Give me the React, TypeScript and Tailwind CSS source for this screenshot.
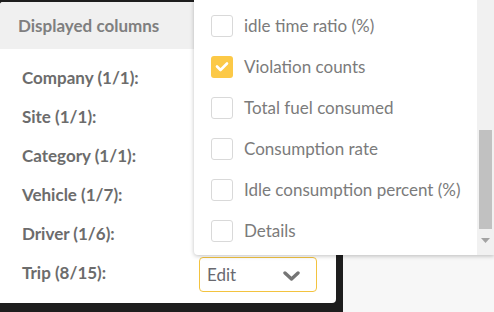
import * as React from 'react';

const GROUPS = ['Company (1/1):', 'Site (1/1):', 'Category (1/1):', 'Vehicle (1/7):', 'Driver (1/6):', 'Trip (8/15):'];

const COLUMNS = [
  { label: 'idle time ratio (%)', checked: false },
  { label: 'Violation counts', checked: true },
  { label: 'Total fuel consumed', checked: false },
  { label: 'Consumption rate', checked: false },
  { label: 'Idle consumption percent (%)', checked: false },
  { label: 'Details', checked: false }
];

const EditSelect = (): React.JSX.Element => (
  <div className="flex h-[35px] w-[118px] items-center justify-between rounded-[4px] border border-[#f3c33f] bg-white pl-[7px] pr-[16px]">
    <span className="text-[17px] text-[#69696f]">Edit</span>
    <svg width="17" height="11" viewBox="0 0 17 11" className="mt-[4px]">
      <path d="M2 2 L8.5 8 L15 2" fill="none" stroke="#757575" strokeWidth="3.4" strokeLinecap="round" strokeLinejoin="round" />
    </svg>
  </div>
);

const Checkbox = ({ checked }: { checked: boolean }): React.JSX.Element =>
  checked ? (
    <span className="flex h-[22px] w-[22px] items-center justify-center rounded-[3px] bg-[#fcc947]">
      <svg width="14" height="11" viewBox="0 0 14 11">
        <path d="M2 5.5 L5.5 9 L12 2.5" fill="none" stroke="#ffffff" strokeWidth="2.6" strokeLinecap="round" strokeLinejoin="round" />
      </svg>
    </span>
  ) : (
    <span className="h-[22px] w-[22px] rounded-[3px] border border-[#d9d9d9] bg-white" />
  );

export default function App(): React.JSX.Element {
  return (
    <div className="relative flex h-[312px] w-[494px] overflow-hidden bg-[#f7f7f7] font-['Lato','Liberation_Sans',sans-serif]">
      <div className="h-full w-[343px] bg-[#1e1e1e] pb-[9px] pr-[7px] pt-[2px]">
        <div className="flex h-full flex-col overflow-hidden rounded-br-[4px] rounded-tl-[3px] bg-white">
          <div className="flex h-[47px] shrink-0 items-center bg-[#f0f0f0] px-[18px]">
            <span className="text-[17px] font-bold text-[#7f7f7f]">Displayed columns</span>
          </div>
          <div className="flex flex-col pt-[9px]">
            {GROUPS.map((g) => (
              <div key={g} className="flex h-[39px] items-center pl-[22px]">
                <span className="w-[177px] text-[17px] font-bold text-[#6c6c6c]">{g}</span>
                <div className="mt-[4px]">
                  <EditSelect />
                </div>
              </div>
            ))}
          </div>
        </div>
      </div>

      {/* open dropdown */}
      <div className="absolute left-[194px] top-0 flex h-[255px] w-[300px] rounded-bl-[4px] bg-white shadow-[0_1px_4px_rgba(0,0,0,0.25)]">
        <div className="flex flex-1 flex-col pl-[17px] pt-[5px]">
          {COLUMNS.map((c) => (
            <div key={c.label} className="flex h-[41px] items-center gap-[11px]">
              <Checkbox checked={c.checked} />
              <span className="text-[17px] text-[#7b7b7b]">{c.label}</span>
            </div>
          ))}
        </div>
        <div className="flex w-[17px] flex-col bg-[#f1f1f1]">
          <div className="h-[130px]" />
          <div className="mx-[2px] h-[99px] bg-[#c1c1c1]" />
          <div className="flex flex-1 items-start justify-center pt-[9px]">
            <svg width="9" height="5" viewBox="0 0 9 5">
              <path d="M0 0 L9 0 L4.5 5 Z" fill="#a3a3a3" />
            </svg>
          </div>
        </div>
      </div>
    </div>
  );
}
